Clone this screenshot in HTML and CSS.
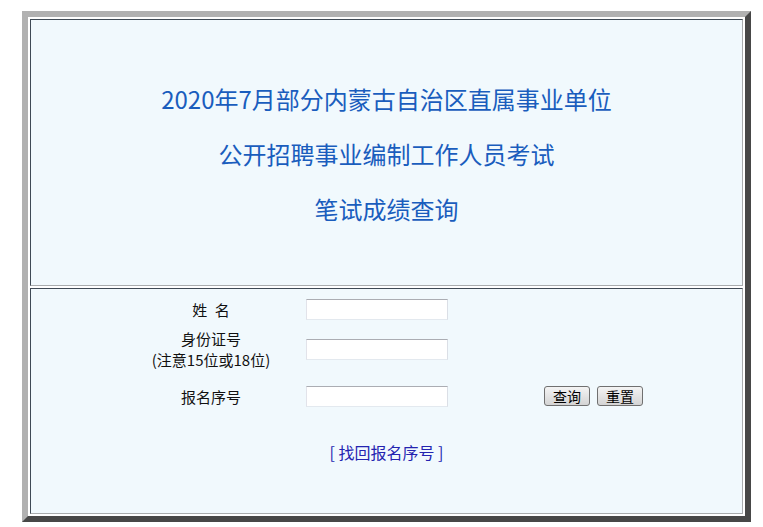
FILE: index.html
```html
<!DOCTYPE html>
<html lang="zh-CN">
<head>
  <meta charset="UTF-8" />
  <title>笔试成绩查询</title>
  <link rel="stylesheet" href="styles.css">
</head>
<body>
  <div class="frame">
    <div class="cell head">
      <div class="title">2020年7月部分内蒙古自治区直属事业单位</div>
      <div class="title">公开招聘事业编制工作人员考试</div>
      <div class="title">笔试成绩查询</div>
    </div>

    <form class="cell query" onsubmit="return false;">
      <div class="row row-name">
        <label class="label" for="xm">姓&ensp;名</label>
        <input class="field" type="text" id="xm" />
      </div>
      <div class="row row-id">
        <label class="label" for="sfz">身份证号<br>(注意15位或18位)</label>
        <input class="field" type="text" id="sfz" />
      </div>
      <div class="row row-no">
        <label class="label" for="bmxh">报名序号</label>
        <input class="field" type="text" id="bmxh" />
        <div class="actions">
          <button type="submit" class="btn">查询</button>
          <button type="reset" class="btn">重置</button>
        </div>
      </div>
      <div class="more">
        <a href="#">[ 找回报名序号 ]</a>
      </div>
    </form>
  </div>
</body>
</html>
```

FILE: styles.css
```css
body {
  margin: 0;
  background: #fff;
  font-family: "Noto Sans CJK SC", "Noto Sans", sans-serif;
}
.frame {
  margin: 11px 0 0 22px;
  width: 729px;
  height: 511px;
  box-sizing: border-box;
  border: 6px solid;
  border-color: #b1b1b1 #474747 #474747 #b1b1b1;
  padding: 2px;
  display: flex;
  flex-direction: column;
  gap: 2px;
}
.cell {
  margin: 0;
  box-sizing: border-box;
  border: 1px solid;
  border-color: #3f4a55 #a9acae #a9acae #3f4a55;
  background: #f1f9fd;
}
.head {
  height: 267px;
  padding-top: 51px;
  text-align: center;
}
.title {
  font-size: 24px;
  line-height: 55px;
  color: #1a5dbd;
}
.query {
  height: 226px;
  padding-top: 9px;
  font-size: 15px;
  color: #111;
}
.row {
  display: flex;
  align-items: center;
  padding-left: 90px;
}
.row-name {
  height: 22px;
}
.row-id {
  height: 42px;
  margin-top: 8px;
}
.row-no {
  height: 22px;
  margin-top: 15px;
}
.label {
  width: 180px;
  margin-right: 5px;
  text-align: center;
  line-height: 21px;
}
.field {
  width: 142px;
  height: 21px;
  box-sizing: border-box;
  margin: 0;
  border: 1px solid;
  border-color: #abadb3 #dbdfe6 #e3e9ef #e2e3ea;
  background: #fff;
}
.actions {
  margin-left: 96px;
  display: flex;
  gap: 7px;
}
.btn {
  width: 46px;
  height: 20px;
  padding: 0;
  font-family: inherit;
  font-size: 14px;
  line-height: 18px;
  color: #000;
  border: 1px solid #707070;
  border-radius: 3px;
  background: linear-gradient(#f4f4f4, #e4e4e4 50%, #d4d4d4);
  cursor: pointer;
}
.more {
  margin-top: 34px;
  text-align: center;
  font-size: 16px;
  line-height: 22px;
}
.more a {
  color: #2424b0;
  text-decoration: none;
}
```
